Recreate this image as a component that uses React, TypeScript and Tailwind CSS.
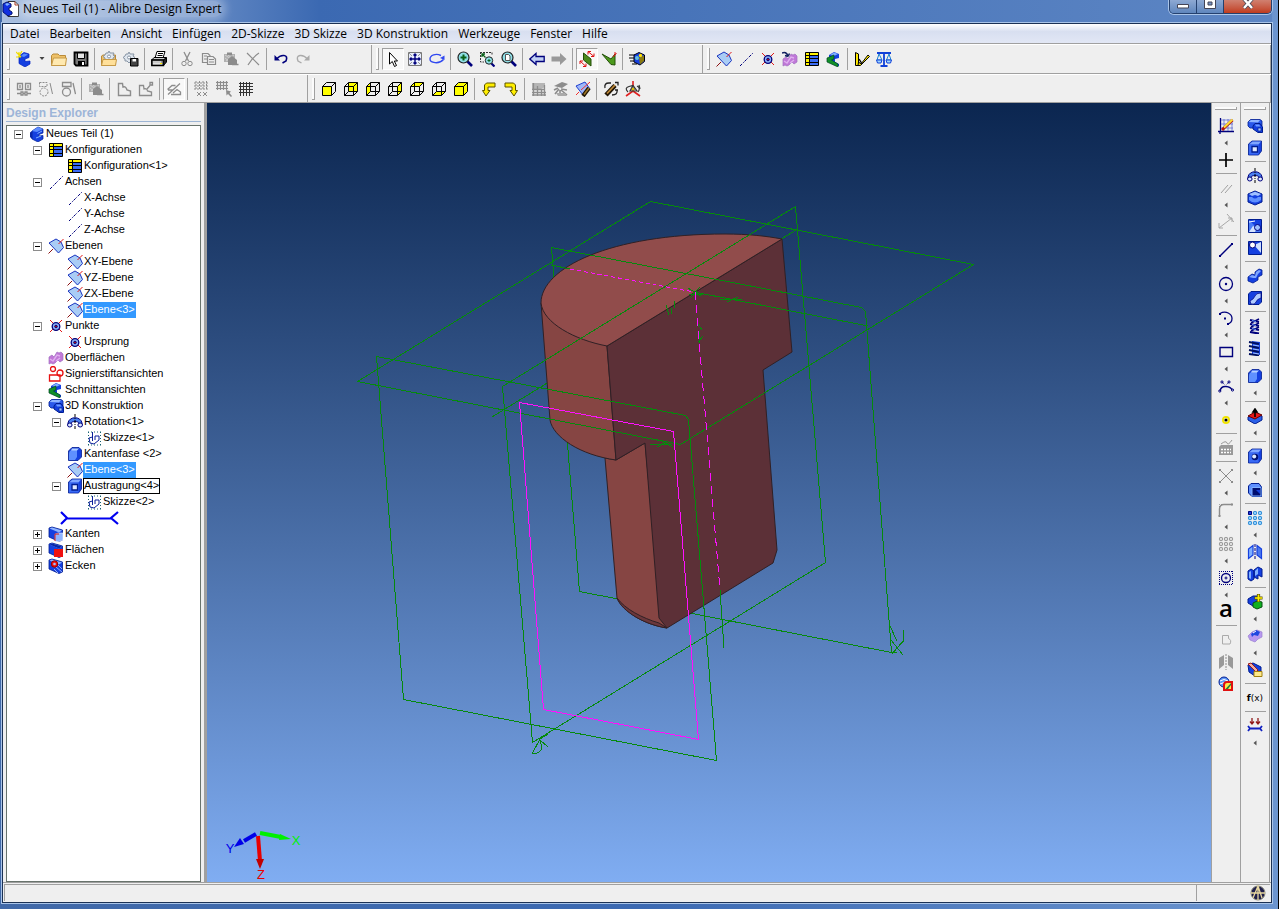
import React from "react";
import clsx from "clsx";

const BLUE = "#1540e0";
const LIGHT = "#7fb0ff";
const NAVY = "#00007c";
const GRAY = "#8c8c8c";

const plane = (
  <>
    <path d="M1 5L8 1 13 4 15.500 9.500 10.500 15z" fill="#a9ccf5" stroke="#1a34c0" />
    <path d="M15.500 1L10.500 6" stroke="#e01818" />
    <path d="M5 11L.5 15.500" stroke="#8a1010" />
  </>
);

const axis = <path d="M2 15L15 2" stroke={NAVY} strokeDasharray="3 1.200 1 1.200" />;

const point = (
  <>
    <path d="M2 2L14 14M14 2L2 14" stroke="#e01818" />
    <circle cx="8" cy="8.500" r="3.800" fill="#8fb2f5" stroke={NAVY} strokeWidth="1.300" />
    <circle cx="8" cy="8.500" r="1.300" fill="#c01010" stroke={NAVY} />
  </>
);

const surface = (
  <>
    <path d="M1 7L4 5 6 7 9 2 11 3 13 2 15 4V10L12 12 10 10 7 13 5 14 3 13 1 14z" fill="#c078d8" stroke="#a070c0" strokeWidth=".7" />
    <path d="M2 9L5 11 9 5 12 6M8 11L12 8" stroke="#e0b0f0" strokeWidth="1.400" />
  </>
);

const table = (
  <>
    <path d="M1.500 1.500h13v13h-13z" fill="#3a6cf4" />
    <path d="M1.500 1.500h13v3h-13zM1.500 1.500h4v13h-4z" fill="#fff200" />
    <path d="M1.500 1.500h13v13h-13zM1.500 4.500h13M1.500 7.500h13M1.500 11.500h13M5.500 1.500v13" stroke="#000" />
  </>
);

const section = (
  <>
    <path d="M3 4L8 1 13 3V7L9 8V11L13 13V15H10L3 10z" fill={BLUE} />
    <path d="M4 4L8 1.500 12 3 8 5z" fill={LIGHT} />
    <path d="M1 7L8 4V8L5.500 9 12 13V16L1 11z" fill="#109028" stroke="#042" strokeWidth=".7" />
  </>
);

const part = (
  <>
    <path d="M3 5L9 1 14 3V7L10 8.500V10L14 9.500V13L9 16 3 13z" fill={BLUE} stroke="#001c90" strokeWidth=".7" />
    <path d="M3 5L9 1 14 3 8 6z" fill="#5b8cff" />
    <path d="M8.500 7.500L13 5M7 12l5-2" stroke={LIGHT} />
    <path d="M1 6.500L3 5V13L1 11z" fill="#0a28a8" />
  </>
);

const cube = (
  <>
    <path d="M1.500 4L5 1H14.500V11L11.500 15H1.500z" fill={BLUE} stroke="#001c90" strokeWidth=".8" />
    <path d="M2 4.500L5.500 1.500H14L11.500 4.500z" fill="#7fa6ff" />
    <path d="M2 5H11.500V14.500H2z" fill="#3a6af4" />
  </>
);

// block with a smaller square hanging off one side
const slanted = (
  <>
    <path d="M1 2L4 1L14.500 4V14L11 15.500L1 11z" fill={BLUE} stroke="#001c90" strokeWidth=".8" />
    <path d="M1.500 2.500L4 1.500L14 4.500L11 6.500z" fill="#8fb4ff" />
  </>
);

const extrude = (
  <>
    <path d="M1 4L3.500 1.500H13L15 3V8L12 10H3L1 8z" fill="#2a58ea" stroke="#001c90" strokeWidth=".8" />
    <path d="M1.500 4L4 2H13L11 4.500z" fill="#8fb4ff" />
    <path d="M6 8L8 5.500H13L15.500 9V14.500H11L6 11z" fill={BLUE} stroke="#001c90" />
    <path d="M8 6.500H12L13.500 8.500H9z" fill="#6f9cff" />
    <path d="M11 10h3v3h-3z" fill="#a5c4ff" stroke="#001c90" strokeWidth=".7" />
  </>
);

const cutout = (
  <>
    {cube}
    <path d="M5 6.500H10.500V12H5z" fill="#dfe9ff" stroke="#001c90" strokeWidth="1.300" />
  </>
);

const revolve = (
  <>
    <path d="M1 11V9C2 2 14 2 15 9v2h-3V9C11 7 5 7 4 9v2z" fill="#4a80f0" stroke={NAVY} />
    <ellipse cx="2.800" cy="11" rx="2.300" ry="2" fill="#dbe8ff" stroke={NAVY} />
    <ellipse cx="13.200" cy="11" rx="2.300" ry="2" fill="#dbe8ff" stroke={NAVY} />
    <path d="M8 0V16" stroke="#000" strokeDasharray="3 1 1 1" />
  </>
);

const round = (
  <>
    <path d="M1.500 5L5 1.500H12L14.500 4V11L11 14.500H1.500z" fill={BLUE} stroke="#001c90" strokeWidth=".8" />
    <path d="M2 14V8Q2 4 6 4H10V11L8 14z" fill="#5f90ff" />
    <path d="M5 2.500H12L10 4.500H4z" fill="#b5d0ff" />
  </>
);

const sketch = (
  <>
    <path d="M2 2H15M2 15H15M2.500 2V15M14.500 2V15" stroke="#156070" strokeDasharray="1 2" />
    <path d="M6.500 2V7L3 8L4 13L8 14L13 10V6H9V10M6.500 7V11" stroke="#0a1f9a" />
  </>
);

const loft = (
  <>
    <path d="M1 9L5 6 8 7V4L12 1 15 2V7L11 9V12L6 15 1 13z" fill={BLUE} stroke="#001c90" strokeWidth=".8" />
    <path d="M2 9L5 7 8 8 9 4 12 2 14 3 11 6 9 10 6 10z" fill="#7fa6ff" />
  </>
);

const helix = (
  <>
    <path d="M3 2L12 4M3 6L12 8M3 10L12 12M3 14L12 15.500" stroke={NAVY} strokeWidth="2.200" />
    <path d="M12 1L4 5M12 5L4 9M12 9L4 13" stroke={NAVY} strokeWidth="1.400" />
    <path d="M5 2.500l4 1M5 6.500l4 1M5 10.500l4 1" stroke="#6a9cff" />
  </>
);

const dots = (color: string, fill: string) => (
  <g stroke={color} fill={fill}>
    {[3, 8, 13].map((y) =>
      [3, 8, 13].map((x) => (
        <rect key={`${x}-${y}`} x={x - 1.5} y={y - 1.5} width="3" height="3" rx=".8" />
      ))
    )}
  </g>
);

const viewCube = (face: string) => (
  <>
    <path d={face} fill="#ffff00" />
    <path d="M1.500 5.500H10.500V14.500H1.500zM5.500 1.500H14.500V10.500M1.500 5.500L5.500 1.500M10.500 5.500L14.500 1.500M10.500 14.500L14.500 10.500" stroke="#000" />
  </>
);

const wires = <path d="M5.500 1.500V10.500H14.500M1.500 14.500L5.500 10.500" stroke="#000" />;

const magnifier = (
  <>
    <path d="M10 10L15 15" stroke={NAVY} strokeWidth="2.600" />
    <circle cx="6.500" cy="6.500" r="5.500" fill="#8fe0e8" stroke="#222" strokeWidth="1.200" />
  </>
);

const folder = (
  <>
    <path d="M.5 14.500V4.500L2 3H7L8.500 4.500H14.500V14.500z" fill="#eec168" stroke="#b98a38" />
    <path d="M.5 14.500L2.500 7H15.500L14.500 14.500z" fill="#ffe9b0" stroke="#c69a48" />
  </>
);

const gear = (
  <>
    <path d="M5 2h2l1-2 1 2h2l2 0-1 2 2 1.500-2 1.500 0 2-2 0L8 11 6 9H4L4 7 2 5.500 4 4z" fill="#dfe6ee" stroke="#8895a5" />
    <circle cx="8" cy="5.500" r="1.500" fill="#fff" stroke="#8895a5" />
  </>
);

const icons: Record<string, React.ReactNode> = {
  plane,
  axis,
  point,
  surface,
  table,
  section,
  part,
  extrude,
  cutout,
  revolve,
  round,
  sketch,
  loft,
  helix,
  newPart: (
    <>
      <path d="M3 5L8 1.500 13 3V6.500L9 8V10.500L14 10V13L9 16 3 12.500z" fill={BLUE} stroke="#0020c0" strokeWidth=".7" />
      <path d="M5 5L8 2.500 12 3.500 8 6z" fill="#5b8cff" />
      <path d="M0 1L5 6M6 0L3 5M0 6H5M3 1V6" stroke="#f0dc00" strokeWidth="1.200" />
    </>
  ),
  folder,
  save: (
    <>
      <path d="M1.500 1.500H14.500V14.500H3L1.500 13z" fill="#777" stroke="#000" strokeWidth="1.800" />
      <path d="M4.500 2H11.500V7.500H4.500z" fill="#e6e6e6" stroke="#000" />
      <path d="M5 10H12V14H5z" fill="#000" />
      <path d="M9 11H11V14H9z" fill="#fff" />
    </>
  ),
  openGear: (
    <>
      <path d="M.5 14.500V5L2 4H14.500V14.500z" fill="#eec168" stroke="#b98a38" />
      {gear}
      <path d="M.5 14.500L2 8.500H15.500L14.500 14.500z" fill="#ffe09a" stroke="#c69a48" />
    </>
  ),
  saveGear: (
    <>
      <g transform="translate(-2 1)">{gear}</g>
      <path d="M7.500 7.500H15V15H7.500z" fill="#444" stroke="#000" />
      <path d="M9.500 8H13V10.500H9.500z" fill="#fff" />
    </>
  ),
  print: (
    <>
      <path d="M4 7L6 .5H14L12 7z" fill="#fff" stroke="#000" />
      <path d="M.8 9L3 6.500H15L13 9z" fill="#ccc" stroke="#000" />
      <path d="M.8 9H12.500V14.500H.8z" fill="#999" stroke="#000" strokeWidth="1.500" />
      <path d="M12.500 9L15.500 6.500V11L12.500 14.500z" fill="#222" stroke="#000" />
      <path d="M2 11H10M2 12.800H11" stroke="#fff" />
      <path d="M9 12.500h2" stroke="#ffee00" />
      <path d="M7 2.500H12M6.500 4.500H11.500" stroke="#000" />
    </>
  ),
  cut: (
    <g stroke={GRAY}>
      <path d="M5 1L9.500 10M11 1L6.500 10" strokeWidth="1.300" />
      <circle cx="5" cy="12.500" r="2.200" />
      <circle cx="11" cy="12.500" r="2.200" />
    </g>
  ),
  copy: (
    <g stroke={GRAY} fill="#ececec" strokeWidth="1.200">
      <path d="M1.500 2.500H7L9 4.500V11.500H1.500z" />
      <path d="M6.500 5.500H12L14.500 8V13.500H6.500z" />
      <path d="M8 8.500H13M8 11H13M3 5H6M3 8H6" />
    </g>
  ),
  paste: (
    <>
      <path d="M1 3H12V11H1z" fill="#b0b0b0" />
      <path d="M2 4l9 6M5 4l6 5M2 7l5 4M11 4L3 10" stroke="#ddd" strokeWidth=".7" />
      <path d="M4 1.500H9V4H4z" fill={GRAY} />
      <path d="M5 8L9 5 14 9V14H5z" fill={GRAY} />
      <path d="M9 13.500H15.500" stroke={GRAY} strokeWidth="1.500" />
    </>
  ),
  remove: <path d="M2 2L14 14M14 2C9 5 6 9 3 14" stroke={GRAY} strokeWidth="1.200" />,
  undo: (
    <>
      <path d="M1.500 4V9.500H7z" fill={NAVY} />
      <path d="M3.500 8Q7 4 11 4.500T13 10L9.500 12" stroke={NAVY} strokeWidth="1.600" />
    </>
  ),
  redo: (
    <>
      <path d="M14.500 4V9.500H9z" fill="#aaa" />
      <path d="M12.500 8Q9 4 5 4.500T3 10L6.500 12" stroke="#aaa" strokeWidth="1.400" />
    </>
  ),
  pointer: <path d="M4.500 1.500V13L7.300 10.500 9.500 15.500 11.500 14.500 9.300 10H12.500z" fill="#fff" stroke="#000" />,
  pan: (
    <>
      <path d="M1.500 1.500H14.500V14.500H1.500z" fill="#e8eefc" stroke="#777" />
      <path d="M1.500 1.500L5 5M14.500 1.500L11 5M1.500 14.500L5 11M14.500 14.500L11 11" stroke="#999" />
      <path d="M8 3V13M3 8H13M6.500 4.500L8 3 9.500 4.500M6.500 11.500L8 13 9.500 11.500M4.500 6.500L3 8 4.500 9.500M11.500 6.500L13 8 11.500 9.500" stroke={NAVY} strokeWidth="1.400" />
    </>
  ),
  rotate: (
    <>
      <path d="M12 4.500C7 2 1 4 1 8S10 13.500 14.500 8.500" stroke="#3048f0" strokeWidth="1.400" />
      <path d="M11 7L15.500 4.500V9z" fill="#3048f0" />
    </>
  ),
  zoomIn: (
    <>
      {magnifier}
      <path d="M6.500 3.500V9.500M3.500 6.500H9.500" stroke="#086018" strokeWidth="2" />
    </>
  ),
  zoomBox: (
    <>
      <path d="M1 1.500H13V4M1.500 1V11H5" stroke="#333" strokeDasharray="2 1" />
      <path d="M3 3L6.500 6.500M3 6V3H6" stroke="#086018" strokeWidth="1.300" />
      <path d="M12 12L15.500 15.500" stroke={NAVY} strokeWidth="2.200" />
      <circle cx="10" cy="9.500" r="3.700" fill="#8fe0e8" stroke="#222" />
      <path d="M10 8v3M8.500 9.500h3" stroke="#086018" />
    </>
  ),
  zoomFit: (
    <>
      {magnifier}
      <path d="M4.500 3.500H7.500L9 5V9.500H4.500z" fill="#fff" stroke="#555" />
    </>
  ),
  back: <path d="M.8 8L7 2.500V5.500H15.200V10.500H7V13.500z" fill="#c0d0f4" stroke={NAVY} strokeWidth="1.300" />,
  forward: <path d="M15.500 8L9 2V5.500H.5V10.500H9V14z" fill="#999" />,
  planeFlip: (
    <>
      <path d="M4.500 2L12 8V15L4.500 9z" fill="#4c8a1c" stroke="#245008" />
      <path d="M15 5.500L9 .5M1 10L7 15.500M9 3.500V.5H12M1 13V10H4M15 2.500V5.500H12M7 12.500V15.500H4" stroke="#e01010" />
    </>
  ),
  planeFace: (
    <>
      <path d="M1 3L10 8 14 3V14L10 13.500z" fill="#4c9a1c" stroke="#245008" />
      <path d="M12 6L15.500 2M14 1v3" stroke="#e01010" />
    </>
  ),
  render: (
    <>
      <path d="M0 4H6M0 7H6M1 10H6M3 13H8" stroke="#000" strokeWidth="1.200" />
      <path d="M5 4L10 1.500 15.500 4V10.500L11 14 5 11z" fill={BLUE} stroke="#001" />
      <path d="M10 7L15 4.500V10L11 13.500z" fill="#8a7a10" />
      <circle cx="8" cy="7" r="2" fill="#60c0e0" />
      <circle cx="11.500" cy="4.500" r="1.700" fill="#ffe000" />
    </>
  ),
  surfaceNew: (
    <>
      <g transform="translate(0 1)">{surface}</g>
      <path d="M0 2Q4 0 6 5M6 5.500L3 4.500M6 5.500L7.500 2.500" stroke="#102060" strokeWidth="1.500" />
    </>
  ),
  measure: (
    <>
      <path d="M1.500 1.500L4.500 3V14.500H1.500z" fill="#ffe900" stroke="#000" />
      <path d="M4.500 11L7 13L14 4L15.500 5.500L6.500 14.500H4z" fill="#ffe900" stroke="#000" />
      <path d="M5 8L7.500 12" stroke="#000" strokeWidth="1.400" />
    </>
  ),
  scale: (
    <>
      <path d="M8 1V14M4.500 15H11.500M1 2H15" stroke="#1040d8" strokeWidth="1.800" />
      <path d="M3 3L1 9H6zM13 3L10.500 9H15z" stroke="#1a80d0" />
      <path d="M.5 9H6L5 12H1.500zM10 9H15.500L14.500 12H11z" fill="#9fd8ff" stroke="#1040d8" />
    </>
  ),
  relate: (
    <g stroke={GRAY} strokeWidth="1.300">
      <path d="M1.500 2.500H6.500V8.500H1.500zM9.500 2.500H14.500V8.500H9.500zM1 12.500h4M11 12.500h4M5 11h2v3H5zM9 11h2v3H9zM4 4v3M12 4v3M7 12.500h2" />
    </g>
  ),
  shapesDash: (
    <g stroke={GRAY}>
      <path d="M1.500 1.500H9V5.500H1.500z" strokeDasharray="2 1" />
      <circle cx="6" cy="11" r="4" strokeDasharray="2 1" />
      <path d="M12 2L14.500 13" />
    </g>
  ),
  shapes: (
    <g stroke={GRAY} strokeWidth="1.300">
      <path d="M2.500 1.500H11V5.500H2.500zM13 2L15.500 13" />
      <circle cx="6.500" cy="11" r="4" />
    </g>
  ),
  outline: <path d="M2.500 2.500H6.500L7 6Q10 5 11 9L14.500 10V14.500H2.500z" stroke={GRAY} strokeWidth="1.400" />,
  outlineNew: (
    <g stroke={GRAY} strokeWidth="1.300">
      <path d="M1.500 4.500H5.500L6 8Q9 7 9.500 10L13.500 11V14.500H1.500z" />
      <path d="M9 8L12 4.500M12 1.500h2.500v2.500H12z" />
    </g>
  ),
  sketchShow: <path d="M2 13.500L14 2.500M1.500 8.500L6 4.500H9.500M2 9H7M5 13.500H14.500V11L11 8.500L7 12" stroke={GRAY} strokeWidth="1.300" />,
  snapGrid: (
    <g stroke={GRAY}>
      <path d="M2 0V9M5.500 0V9M9 0V9M12.500 0V9M0 2H14M0 5H14M0 8H14" strokeDasharray="2 1" />
      <path d="M3 11l4 4M7 11l-4 4M9 11l4 4M13 11l-4 4" />
    </g>
  ),
  gridPick: (
    <>
      <path d="M1.500 0V9M4.500 0V9M7.500 0V9M10.500 0V9M0 1.500H12M0 4.500H12M0 7.500H12" stroke={GRAY} strokeWidth="1.200" />
      <path d="M10 9L15 10.500 13.500 12 16 15 15 16 12 13 10.500 14.500z" fill={GRAY} />
    </>
  ),
  grid: <path d="M2.500 1V15M5.500 1V15M8.500 1V15M11.500 1V15M1 2.500H15M1 5.500H15M1 8.500H15M1 11.500H15" stroke="#333" />,
  viewFront: viewCube("M1.500 5.500H10.500V14.500H1.500z"),
  viewBack: (
    <>
      {viewCube("M5.500 1.500H14.500V10.500H5.500z")}
      {wires}
    </>
  ),
  viewLeft: (
    <>
      {viewCube("M1.500 5.500L5.500 1.500V10.500L1.500 14.500z")}
      {wires}
    </>
  ),
  viewRight: (
    <>
      {viewCube("M10.500 5.500L14.500 1.500V10.500L10.500 14.500z")}
      {wires}
    </>
  ),
  viewTop: (
    <>
      {viewCube("M1.500 5.500L5.500 1.500H14.500L10.500 5.500z")}
      {wires}
    </>
  ),
  viewBottom: (
    <>
      {viewCube("M1.500 14.500L5.500 10.500H14.500L10.500 14.500z")}
      {wires}
    </>
  ),
  viewIso: viewCube("M1.500 5.500L5.500 1.500H14.500V10.500L10.500 14.500H1.500z"),
  turnLeft: <path d="M5 15L1.500 9.500H3.500V4L5.500 2H14V6H7V9.500H9z" fill="#ffee00" stroke="#5a5200" />,
  turnRight: <path d="M11 15L14.500 9.500H12.500V4L10.500 2H2V6H9V9.500H7z" fill="#ffee00" stroke="#5a5200" />,
  hatch: (
    <>
      <path d="M1 2H14V6L8 9H1z" fill="#b5b5b5" />
      <path d="M2.500 2V15M6.500 5V15M10.500 8V15M13.500 4V15M1 8.500H14M1 11.500H15M1 14H15" stroke={GRAY} strokeWidth="1.300" />
    </>
  ),
  lights: (
    <>
      <path d="M1 5L9 1L15 3L12 5L9 7L5 6z" fill={GRAY} />
      <path d="M5 7L1 9M6 8L2 13M8 8L14 9M8 9L14 14M7 9V12" stroke={GRAY} strokeWidth="1.600" />
      <path d="M3 12H12L14 15H5z" fill="#aaa" />
    </>
  ),
  planePen: (
    <>
      <path d="M1 5L10 1 15 8 8 14z" fill="#9fb8fa" stroke="#2040d0" />
      <path d="M15 1L6 9M1 14L4 11" stroke="#f03030" />
      <path d="M8 15L14 7" stroke="#201505" strokeWidth="4" />
      <path d="M9 13.500L14 7" stroke="#a07828" strokeWidth="1.500" />
    </>
  ),
  penTurn: (
    <>
      <path d="M3 14L12 4.500" stroke="#201505" strokeWidth="4.500" />
      <path d="M4 12.500L12 4" stroke="#c08a38" strokeWidth="1.800" />
      <path d="M2 7Q1 2 6 2H8M14 9Q15 14 9 14M12 1.500h3v3M12 9h3" stroke="#222" strokeWidth="1.300" />
    </>
  ),
  orbit: (
    <>
      <path d="M8 0V5M8 10L1 15M8 10L15 15" stroke="#e02020" strokeWidth="1.600" />
      <path d="M3 11Q-1 7 4 5.500L8 4.500L12 10H5L8 4.500M12 5Q16 7 13 11M14 4l1 4" stroke="#333" strokeWidth="1.200" />
      <circle cx="8" cy="8" r="1.500" fill="#ffe000" stroke="#333" strokeWidth=".6" />
    </>
  ),
  signStift: (
    <g stroke="#e81010" strokeWidth="1.300">
      <circle cx="5" cy="3" r="2.500" />
      <circle cx="12" cy="7" r="3" />
      <path d="M1.500 9H12V15H1.500z" />
    </g>
  ),
  edge: (
    <>
      {slanted}
      <path d="M7 8L10 7H15V14L11 15.500H7z" fill="#8fb4ff" stroke="#fff" strokeWidth=".5" />
      <path d="M7 15V8H11" stroke="#d01010" />
    </>
  ),
  face: (
    <>
      {slanted}
      <path d="M1.500 2.500L4 1.500L14 4.500L11 6.500z" fill="#0a28a8" />
      <path d="M6 7H15V15H6z" fill="#f01010" />
    </>
  ),
  vertex: (
    <>
      {slanted}
      <path d="M6 11l4 4M8 9l6 5M10 7l4 4" stroke="#b5c8ff" strokeWidth=".8" />
      <circle cx="6.500" cy="6" r="3.200" fill="#f01010" stroke="#900" />
      <circle cx="6.500" cy="6" r="1.300" fill="#9fc0ff" />
    </>
  ),
  sketchMode: (
    <>
      <path d="M2.500 0V13.500H16M0 13.500H2V16" stroke={NAVY} strokeWidth="1.300" />
      <path d="M6 1V13M10 1V13M14 1V13M3 2H15M3 6H15M3 10H15" stroke="#5060d0" strokeWidth=".7" />
      <path d="M14.500 2L6 10L4 12" stroke="#b01010" strokeWidth="3" />
      <path d="M14.500 1.500L6 9.500" stroke="#ffe030" strokeWidth="2" />
    </>
  ),
  plus: <path d="M8 1V15M1 8H15" stroke="#000" strokeWidth="1.700" />,
  parallel: <path d="M3 13L10 5M7 13L14 5" stroke="#a0a0a0" />,
  dimension: <path d="M1 14L14 4M1 14V9M1 14H5M14 4V8M14 4H10M9 0L16 8" stroke="#a8a8a8" />,
  line: (
    <>
      <path d="M2 14L14 2" stroke={NAVY} strokeWidth="1.400" />
      <path d="M1 13h2v2H1zM13 1h2v2H13z" fill={NAVY} />
    </>
  ),
  circle: (
    <>
      <circle cx="8" cy="8" r="6.500" stroke={NAVY} strokeWidth="1.300" />
      <circle cx="8" cy="8" r="1.200" fill={NAVY} />
    </>
  ),
  arc: (
    <>
      <path d="M2 3.500C8 0 14 4 14 8.500Q14 13 9.500 14" stroke={NAVY} strokeWidth="1.300" />
      <path d="M1 3h2v2H1zM9 13h2v2H9zM6 7.500h2v2H6z" fill={NAVY} />
    </>
  ),
  rect: <path d="M2 3.500H14.500V12.500H2z" stroke={NAVY} strokeWidth="1.400" />,
  spline: (
    <g stroke={NAVY}>
      <path d="M2 13Q3 8 8 8.500T14 12" strokeWidth="1.400" />
      <circle cx="1.800" cy="13" r="1.100" />
      <circle cx="14.500" cy="12" r="1.100" />
      <circle cx="4" cy="4" r="1.100" />
      <circle cx="11" cy="4" r="1.100" />
      <path d="M4 4L7 7M11 4L8 7" strokeDasharray="1 1" />
    </g>
  ),
  node: (
    <>
      <circle cx="8" cy="8" r="3" fill="#fff" stroke="#f0e400" strokeWidth="2" />
      <circle cx="8" cy="8" r="1.600" fill="#000" />
    </>
  ),
  keyboard: (
    <>
      <path d="M1 7L3 5H15V15H1z" fill="#999" />
      <path d="M3 9.500H13M3 12.500H13" stroke="#fff" strokeWidth="1.500" strokeDasharray="2 1" />
      <path d="M3 4Q8 0 9 3T14 0" stroke="#999" />
    </>
  ),
  trim: (
    <g stroke={GRAY}>
      <path d="M2 2L14 14M14 2L2 14" />
      <path d="M1 1h2v2H1zM13 1h2v2H13zM1 13h2v2H1zM13 13h2v2H13z" fill={GRAY} stroke="none" />
    </g>
  ),
  fillet: (
    <>
      <path d="M1.500 14V7Q1.500 2.500 6 2.500H14" stroke={GRAY} strokeWidth="1.400" />
      <path d="M1.500 7V2.500H6" stroke={GRAY} strokeDasharray="1 1" />
      <path d="M.5 13h2v2h-2zM13 1.500h2v2h-2z" fill={GRAY} />
    </>
  ),
  patternGray: dots("#8c8c8c", "#ddd"),
  circleBox: (
    <>
      <path d="M1 1.500H15M1 14.500H15M1.500 1V15M14.500 1V15" stroke={NAVY} strokeDasharray="1 1" />
      <circle cx="8" cy="8" r="4.500" stroke={NAVY} strokeWidth="1.300" />
      <path d="M8 6.500V9.500M6.500 8H9.500" stroke={NAVY} />
    </>
  ),
  shapeGray: <path d="M4.500 3.500H10.500V6.500Q14 8 12 12H4.500z" stroke="#aaa" />,
  mirrorGray: (
    <>
      <path d="M1 4L6 1V11L1 15zM15 4L10 1V11L15 15z" fill="#999" />
      <path d="M8 0V16" stroke={GRAY} strokeDasharray="2 1" />
    </>
  ),
  project: (
    <>
      <circle cx="6" cy="6" r="5" fill="#5f98f8" stroke="#001c90" />
      <path d="M2 5q4-3 8 0M2 8q4-3 8 0" stroke="#fff" />
      <path d="M6 14V9Q6 6 9 6H14V14z" fill="#ffe74a" stroke="#e01010" strokeWidth="2" />
      <path d="M7.500 13H10L13 9V7z" fill="#208040" />
    </>
  ),
  revolveCut: (
    <>
      <path d="M1 4L8 1L15 4V12L8 15L1 12z" fill={BLUE} stroke="#001c90" />
      <path d="M2 4L8 1.800L14 4L11 6L8 5L5 6z" fill="#9fc0ff" />
      <path d="M2 7L5 7Q8 10 11 7L14 7V10Q8 15 2 10z" fill="#5f90ff" />
    </>
  ),
  sweep: (
    <>
      <path d="M1.500 1.500H14.500V14.500H1.500z" fill="#4a7cf8" stroke="#001c90" />
      <path d="M2 2L14 14V2z" fill={BLUE} />
      <path d="M2 14L6 8L10 10L8 14z" fill="#d5e4ff" />
      <circle cx="10.500" cy="9.500" r="3" fill="#9fc0ff" stroke={NAVY} />
      <path d="M2 4L8 3" stroke="#fff" />
    </>
  ),
  sweepCut: (
    <>
      <path d="M1.500 1.500H14.500V14.500H1.500z" fill={BLUE} stroke="#001c90" />
      <path d="M7 5L14 2V13z" fill="#cfe0ff" />
      <circle cx="5.500" cy="5" r="3" fill="#fff" stroke={NAVY} />
    </>
  ),
  loftCut: (
    <>
      <path d="M1.500 4L4 1.500H14.500V12L12 14.500H1.500z" fill={BLUE} stroke="#001c90" />
      <path d="M3 11Q7 9 8 6T14 3V8Q10 9 9 12T4 14z" fill="#b0ccff" stroke={NAVY} strokeWidth=".7" />
    </>
  ),
  helixCut: (
    <>
      <path d="M5 1L13 2V15L5 14z" fill={BLUE} />
      <path d="M2 2L12 4M2 6L12 8M2 10L12 12M2 14L12 15.500" stroke="#001060" strokeWidth="1.800" />
      <path d="M6 5l6 1M6 9l6 1M6 13l6 1" stroke="#9fc0ff" />
    </>
  ),
  shell: (
    <>
      <path d="M1 9L8 5L15 8V12L8 16L1 12z" fill="#2a60e8" stroke="#001c90" />
      <path d="M1 8L8 4L15 7L8 11z" fill="#e81818" stroke="#600" />
      <path d="M8 9V2M6 4L8 1L10 4z" stroke="#000" fill="#000" strokeWidth="1.600" />
    </>
  ),
  hole: (
    <>
      {cube}
      <circle cx="8" cy="9" r="3.300" fill="#001070" />
      <circle cx="7.200" cy="8.500" r="2" fill="#dfeaff" />
    </>
  ),
  box: (
    <>
      <path d="M1.500 4L4 1.500H12L14.500 5V14.500H5L1.500 11z" fill="#5f90ff" stroke="#001c90" />
      <path d="M5 5.500H14V14H5z" fill="#000d70" stroke={LIGHT} />
      <path d="M9 8h4v4z" fill={BLUE} />
    </>
  ),
  pattern: (
    <>
      {dots("#1a80d0", "#8fd0ff")}
      <path d="M1.500 1.500h3v3h-3z" fill={BLUE} stroke={NAVY} />
    </>
  ),
  mirror: (
    <>
      <path d="M1.500 5L6 1.500V11L1.500 14.500z" fill={LIGHT} stroke={BLUE} strokeWidth="1.200" />
      <path d="M14.500 5L10 1.500V11L14.500 14.500z" fill="#4a78f0" stroke={BLUE} strokeWidth="1.200" />
      <path d="M8 0V16" stroke={NAVY} strokeDasharray="3 1" />
    </>
  ),
  bend: (
    <>
      <path d="M1 5L4 3L7 5V11V4L11 1L15 3V11L11 9V13L7 11V13L4 15L1 13z" fill={BLUE} stroke="#001c90" />
      <path d="M2 6L4 5V13L2 12zM8 5L11 2V8L8 10z" fill={LIGHT} />
    </>
  ),
  boolean: (
    <>
      <path d="M1 5L6 2H11V9L6 12L1 9z" fill={BLUE} stroke="#001c90" />
      <path d="M6 9L10 7L15 8V13L10 15L6 13z" fill="#10b020" stroke="#065010" />
      <path d="M11.500 0V8M7.500 4H15.500" stroke="#5a5200" strokeWidth="3.200" />
      <path d="M11.500 .5V7.500M8 4H15" stroke="#fff000" strokeWidth="1.700" />
    </>
  ),
  thicken: (
    <>
      <path d="M1 8L5 4L10 2L15 4V9L11 11L8 14L3 12z" fill="#b898f0" stroke="#9a80d0" strokeWidth=".7" />
      <path d="M4 6L9 2L13 4L11 8L7 7L5 9z" fill="#2048e0" />
      <path d="M6 5L9 3" stroke="#fff" />
    </>
  ),
  annotate: (
    <>
      <path d="M1 3L6 1L14 5V11L8 14L2 10z" fill={BLUE} stroke="#001c90" />
      <path d="M1 2L4 1L11 8L9 10z" fill="#f0b0a0" stroke="#a01818" />
      <path d="M7 9.500H15V14.500H7z" fill="#ffe98a" stroke="#a08010" />
    </>
  ),
  rollback: (
    <>
      <path d="M5 0V5M3 3.500L5 6L7 3.500M11 0V5M9 3.500L11 6L13 3.500" stroke="#901818" strokeWidth="1.300" />
      <path d="M1 8L3 10.500L1 13M15 8L13 10.500L15 13M3 10.500H13" stroke="#1020c0" strokeWidth="1.800" />
    </>
  ),
};

function Icon({ name }: { name: string }) {
  return (
    <svg viewBox="0 0 16 16" className="block h-4 w-4 shrink-0" fill="none" aria-hidden="true">
      {icons[name]}
    </svg>
  );
}

// "|" is a separator, "v" and "<" are drop-down arrows, a trailing "!" marks a pressed button
const standardBar = ["newPart", "v", "folder", "save", "|", "openGear", "saveGear", "|", "print", "|", "cut", "copy", "paste", "remove", "|", "undo", "redo"];
const viewBar = ["pointer!", "pan", "rotate", "|", "zoomIn", "zoomBox", "zoomFit", "|", "back", "forward", "|", "planeFlip!", "planeFace", "|", "render"];
const referenceBar = ["plane", "axis", "point", "surfaceNew", "table", "section", "|", "measure", "scale"];
const sketchBar = ["relate", "shapesDash", "shapes", "|", "paste", "|", "outline", "outlineNew", "|", "sketchShow!", "|", "snapGrid", "gridPick", "grid"];
const orientationBar = ["viewFront", "viewBack", "viewLeft", "viewRight", "viewTop", "viewBottom", "viewIso", "|", "turnLeft", "turnRight", "|", "hatch", "lights", "planePen", "|", "penTurn", "orbit"];

const drawBar = [
  "sketchMode", "<", "plus", "|", "parallel", "<", "dimension", "|", "line", "<", "circle", "<", "arc", "<", "rect", "<",
  "spline", "<", "node", "|", "keyboard", "|", "trim", "<", "fillet", "<", "patternGray", "<", "circleBox", "<", "text", "|",
  "shapeGray", "mirrorGray", "project",
];
const featureBar = [
  "extrude", "cutout", "|", "revolve", "revolveCut", "|", "sweep", "sweepCut", "|", "loft", "loftCut", "|", "helix", "helixCut", "|",
  "round", "<", "|", "shell", "<", "|", "hole", "<", "box", "|", "pattern", "<", "mirror", "bend", "|", "boolean", "<",
  "thicken", "<", "annotate", "|", "formula", "|", "rollback", "<",
];

function ToolButton({ item }: { item: string }) {
  const name = item.replace("!", "");
  const pressed = item.endsWith("!");
  return (
    <button
      type="button"
      aria-label={name}
      className={clsx(
        "flex h-[22px] w-[22px] shrink-0 items-center justify-center",
        pressed && "border border-r-white border-b-white border-t-[#a0a0a0] border-l-[#a0a0a0] bg-[#f8f8f8]"
      )}
    >
      {name === "text" ? (
        <span className="pb-2 font-['Open_Sans',sans-serif] text-2xl leading-[22px] font-semibold text-black">a</span>
      ) : name === "formula" ? (
        <span className="font-['DejaVu_Sans',sans-serif] text-[9px] text-black">
          <b>f</b>(x)
        </span>
      ) : (
        <Icon name={name} />
      )}
    </button>
  );
}

function ToolBar({ items, label, className }: { items: string[]; label: string; className?: string }) {
  return (
    <div role="toolbar" aria-label={label} className={clsx("flex h-full items-center border-r border-[#a0a0a0] pl-1", className)}>
      <span className="mr-[3px] h-[22px] w-[3px] border-r border-b border-[#a0a0a0] bg-[#fbfbfb]" />
      {items.map((item, i) => {
        if (item === "|") return <span key={i} className="mr-[3px] ml-[2px] h-[22px] w-px bg-[#a0a0a0]" />;
        if (item === "v")
          return (
            <button key={i} type="button" aria-label="more" className="flex w-[13px] justify-center">
              <svg viewBox="0 0 6 4" className="h-1 w-[6px]">
                <path d="M.5 0H5.500L3 3z" fill="#444" />
              </svg>
            </button>
          );
        return <ToolButton key={i} item={item} />;
      })}
    </div>
  );
}

function SideBar({ items, label }: { items: string[]; label: string }) {
  return (
    <div role="toolbar" aria-label={label} className="flex w-[29px] flex-col items-center border-r border-[#a0a0a0]">
      <span className="mt-1 mb-[5px] h-[3px] w-[22px] border-r border-b border-[#a0a0a0] bg-[#fbfbfb]" />
      {items.map((item, i) => {
        if (item === "|") return <span key={i} className="mt-[2px] mb-[3px] h-px w-[21px] bg-[#a0a0a0]" />;
        if (item === "<")
          return (
            <button key={i} type="button" aria-label="more" className="flex h-3 w-[22px] items-center justify-center">
              <svg viewBox="0 0 4 6" className="h-[6px] w-1">
                <path d="M3.500 .5V5.500L.5 3z" fill="#555" />
              </svg>
            </button>
          );
        return <ToolButton key={i} item={item} />;
      })}
    </div>
  );
}

type Node = { level: number; icon: string; text: string; box?: "+" | "-"; state?: "selected" | "framed" };

const tree: Node[] = [
  { level: 0, icon: "part", text: "Neues Teil (1)", box: "-" },
  { level: 1, icon: "table", text: "Konfigurationen", box: "-" },
  { level: 2, icon: "table", text: "Konfiguration<1>" },
  { level: 1, icon: "axis", text: "Achsen", box: "-" },
  { level: 2, icon: "axis", text: "X-Achse" },
  { level: 2, icon: "axis", text: "Y-Achse" },
  { level: 2, icon: "axis", text: "Z-Achse" },
  { level: 1, icon: "plane", text: "Ebenen", box: "-" },
  { level: 2, icon: "plane", text: "XY-Ebene" },
  { level: 2, icon: "plane", text: "YZ-Ebene" },
  { level: 2, icon: "plane", text: "ZX-Ebene" },
  { level: 2, icon: "plane", text: "Ebene<3>", state: "selected" },
  { level: 1, icon: "point", text: "Punkte", box: "-" },
  { level: 2, icon: "point", text: "Ursprung" },
  { level: 1, icon: "surface", text: "Oberflächen" },
  { level: 1, icon: "signStift", text: "Signierstiftansichten" },
  { level: 1, icon: "section", text: "Schnittansichten" },
  { level: 1, icon: "extrude", text: "3D Konstruktion", box: "-" },
  { level: 2, icon: "revolve", text: "Rotation<1>", box: "-" },
  { level: 3, icon: "sketch", text: "Skizze<1>" },
  { level: 2, icon: "round", text: "Kantenfase <2>" },
  { level: 2, icon: "plane", text: "Ebene<3>", state: "selected" },
  { level: 2, icon: "cutout", text: "Austragung<4>", box: "-", state: "framed" },
  { level: 3, icon: "sketch", text: "Skizze<2>" },
  { level: 1, icon: "marker", text: "" },
  { level: 1, icon: "edge", text: "Kanten", box: "+" },
  { level: 1, icon: "face", text: "Flächen", box: "+" },
  { level: 1, icon: "vertex", text: "Ecken", box: "+" },
];

const indent = ["pl-[7px]", "pl-[26px]", "pl-[45px]", "pl-[64px]"];

function TreeRow({ node }: { node: Node }) {
  if (node.icon === "marker") {
    return (
      <li className="flex h-4 items-center pl-[53px]">
        <svg viewBox="0 0 60 14" className="h-[14px] w-[60px]" fill="none">
          <path d="M1 1L7 7L1 13M58 1L51 7L58 13M7 7.500H51" stroke="#0000f0" strokeWidth="2.200" />
        </svg>
      </li>
    );
  }
  return (
    <li className={clsx("flex h-4 items-center", indent[node.level])}>
      {node.box ? (
        <button type="button" aria-label="toggle" className="mr-[6px] flex h-[9px] w-[9px] shrink-0 items-center justify-center border border-[#8c8c8c] bg-white">
          <svg viewBox="0 0 5 5" className="h-[5px] w-[5px]">
            <path d={node.box === "+" ? "M0 2.500H5M2.500 0V5" : "M0 2.500H5"} stroke="#000" />
          </svg>
        </button>
      ) : (
        <span className="w-[15px] shrink-0" />
      )}
      <Icon name={node.icon} />
      <span
        className={clsx(
          "h-4 px-px leading-[15px] whitespace-nowrap",
          node.state === "selected" && "bg-[#3399ff] text-white",
          node.state === "framed" && "outline outline-black -outline-offset-1"
        )}
      >
        {node.text}
      </span>
    </li>
  );
}

function Viewport() {
  return (
    <div className="min-w-0 flex-1 overflow-hidden bg-linear-to-b from-[#0b2650] to-[#80adf2]">
      <svg viewBox="207 103 1004 779" className="h-full w-full" fill="none" strokeWidth="1" role="img" aria-label="Neues Teil (1)">
        {/* hidden parts of the reference planes first, the solid covers them */}
        <g stroke="#058a0c" shapeRendering="crispEdges">
          <path d="M551.500 247.500L579.500 591.500L891.500 652.500" />
          <path d="M492 417L796 230" />
        </g>

        <g stroke="#302025" strokeLinejoin="round">
          <path d="M605 458L617 598C624 613 646 625 667 628L660 600L645 443L616 460z" fill="#864543" />
          <path d="M617 598C622 612 646 625 667 628L659 623C642 618 625 609 617 598z" fill="#6b373b" />
          <path d="M541 303L550 420C553 437 580 455 616 460L607 346z" fill="#864543" />
          <path d="M607 346L782 239L792 352L763 370L777 550L773 563L667 628L659 618L645 443L616 460z" fill="#5c3037" />
          <path d="M607 346C575 340 543 323 541 303C541 268 610 234 725 234C748 234 766 236 782 239z" fill="#914c4b" />
        </g>

        <g stroke="#058a0c" shapeRendering="crispEdges">
          <path d="M650.500 201.500L973.500 264.500L680.500 444.500L357.500 381.500z" />
          <path d="M551.500 247.500L861.500 307.500L865.500 311.500L891.500 652.500H897" />
          <path d="M502.500 386.500L795.500 206.500L825.500 562.500L532.500 742.500z" />
          <path d="M376.500 356.500L685.500 415.500L688.500 419.500L716.500 760.500L403.500 699.500z" />
          <path d="M551 265L570 269M694 292L868 326M720 590L724 648" />
          <path d="M688 288L701 296M700 287L690 298M689 294H703M666 305L669 315M672 308L671 314M674 301L675 308M697 323L702 330M700 331L699 343M703 336L698 342" />
          <path d="M720 299H742M727 302L738 297M650 444H672M657 447L668 441M660 440L673 447" />
          <path d="M890 626L897 641M903 630V642L893 652M891 640L903 655M903 641L892 654" />
          <path d="M532 754L540 739L548 734M532 754Q541 754 542 747L540 740L548 747" />
        </g>

        <g stroke="#ff10ff" shapeRendering="crispEdges">
          <path d="M519.500 402.500L673.500 431.500L698.500 739.500L543.500 709.500z" />
          <path d="M570 269L694 292" strokeDasharray="4 3" />
          <path d="M695 292L720 590" strokeDasharray="8 5" />
        </g>

        <g strokeWidth="4">
          <path d="M256 834L244 841" stroke="#0000e8" />
          <path d="M234 847L240 838L244 844z" fill="#0000e8" />
          <path d="M260 833L281 837" stroke="#00f000" />
          <path d="M291 839L280 834L279 840z" fill="#00f000" />
          <path d="M258 836L260 861" stroke="#e80000" />
          <path d="M260 869L256 859H264z" fill="#c00000" />
        </g>
        <g className="font-['Liberation_Sans',sans-serif] text-[13px]" textAnchor="middle">
          <text x="296" y="845" fill="#00f000">X</text>
          <text x="230" y="853" fill="#0000e8">Y</text>
          <text x="261" y="879" fill="#e80000">Z</text>
        </g>
      </svg>
    </div>
  );
}

const menus = ["Datei", "Bearbeiten", "Ansicht", "Einfügen", "2D-Skizze", "3D Skizze", "3D Konstruktion", "Werkzeuge", "Fenster", "Hilfe"];

export default function App() {
  return (
    <div className="flex h-screen flex-col overflow-hidden border-r border-black bg-linear-to-r from-[#4169a8] via-[#3b69b2] to-[#6c95cf] pr-[6px] pb-[6px] pl-[2px] font-['Open_Sans',sans-serif] text-xs text-black">
      <header className="flex h-[23px] shrink-0 items-start bg-linear-to-r from-[#a9bfdf] via-[#3b69b2] via-25% to-[#5d86c4]">
        <div className="flex h-[18px] items-center gap-[2px]">
          <svg viewBox="0 0 18 18" className="h-[18px] w-[18px]" fill="none">
            <path d="M6 1.500H13L16.500 5V16.500H6z" fill="#fff" stroke="#333" />
            <path d="M13 1.500V5H16.500" stroke="#a03018" />
            <path d="M1 4L5 2L9 4V7L7 8V10L10 12V14L6 16L1 12z" fill="#1030e0" stroke="#001070" />
            <path d="M3 4L5 3L8 4L5 6z" fill="#7fb0ff" />
          </svg>
          <h1 className="rounded-full bg-white/30 px-px text-xs shadow-[0_0_8px_4px_rgba(255,255,255,0.3)]">Neues Teil (1) - Alibre Design Expert</h1>
        </div>
        <div className="ml-auto flex h-[14px] overflow-hidden rounded-b-[5px] border border-t-0 border-[#24406e] shadow-[0_0_0_1px_#a9c4e8]">
          <button type="button" aria-label="Minimieren" className="flex w-[27px] justify-center border-r border-[#24406e] bg-linear-to-b from-[#8ea9d3] to-[#5f86bd]">
            <svg viewBox="0 0 12 10" className="h-[10px] w-3">
              <path d="M.5 4.500H11.500V8H.5z" fill="#fff" stroke="#445" />
            </svg>
          </button>
          <button type="button" aria-label="Maximieren" className="flex w-[27px] justify-center border-r border-[#24406e] bg-linear-to-b from-[#8ea9d3] to-[#5f86bd]">
            <svg viewBox="0 0 12 10" className="h-[10px] w-3">
              <path d="M.5 -3H11.500V8.500H.5z" fill="#fff" stroke="#445" />
              <path d="M4 2H8V5H4z" fill="#7592c4" stroke="#445" />
            </svg>
          </button>
          <button type="button" aria-label="Schließen" className="flex w-[47px] justify-center bg-linear-to-b from-[#d08070] to-[#c03a1c]">
            <svg viewBox="0 0 12 10" className="h-[10px] w-3" fill="none">
              <path d="M2 -1L10 8M10 -1L2 8" stroke="#445" strokeWidth="4" />
              <path d="M2 -1L10 8M10 -1L2 8" stroke="#fff" strokeWidth="2.500" />
            </svg>
          </button>
        </div>
      </header>

      <div className="flex min-h-0 flex-1 flex-col border border-[#1b3154] bg-[#efefef] shadow-[0_0_0_1px_#a9c4e8]">
        <nav className="flex h-5 shrink-0 items-center gap-[10px] border-b border-[#a0a0a0] bg-linear-to-b from-white via-[#d8dff0] via-40% to-[#e2e7f5] pl-[7px]">
          {menus.map((menu) => (
            <button key={menu} type="button" className="leading-4">
              {menu}
            </button>
          ))}
        </nav>

        <div className="flex h-[30px] shrink-0 border-t border-b border-t-white border-b-[#a0a0a0]">
          <ToolBar items={standardBar} label="Standard" className="w-[369px]" />
          <ToolBar items={viewBar} label="Ansicht" className="w-[331px]" />
          <ToolBar items={referenceBar} label="Referenz" className="flex-1" />
        </div>
        <div className="flex h-[29px] shrink-0 border-t border-b border-t-white border-b-[#a0a0a0]">
          <ToolBar items={sketchBar} label="Skizze" className="w-[305px]" />
          <ToolBar items={orientationBar} label="Ausrichtung" className="flex-1" />
        </div>

        <main className="flex min-h-0 flex-1">
          <aside className="flex w-[201px] shrink-0 flex-col px-[3px]">
            <h2 className="mb-[3px] h-[19px] border-b border-[#9db5d4] font-['Liberation_Sans',sans-serif] text-xs leading-5 font-bold text-[#9db5d8]">Design Explorer</h2>
            <ul className="min-h-0 flex-1 overflow-hidden border border-[#68736c] bg-white font-['Liberation_Sans',sans-serif] text-[11px]">
              {tree.map((node, i) => (
                <TreeRow key={i} node={node} />
              ))}
            </ul>
          </aside>
          <div className="w-[3px] shrink-0 bg-[#a0a0a0]" />
          <Viewport />
          <div className="flex shrink-0 border-l border-[#a0a0a0] pr-px">
            <SideBar items={drawBar} label="2D-Skizze" />
            <SideBar items={featureBar} label="3D Konstruktion" />
          </div>
        </main>

        <footer className="flex h-5 shrink-0 border-t border-[#a0a0a0] p-px">
          <div className="flex-1 border-t border-r border-l border-[#a0a0a0]" />
          <div className="flex w-[73px] items-center justify-end border-t border-[#a0a0a0] pr-1">
            <svg viewBox="0 0 16 16" className="h-4 w-4" fill="none">
              <circle cx="8" cy="8" r="7" fill="#20204c" stroke="#8a8a7a" />
              <path d="M8 1V15M1 8H15M3 13L8 1L12 13" stroke="#e8d8a0" strokeWidth="1.300" />
            </svg>
          </div>
        </footer>
      </div>
    </div>
  );
}
